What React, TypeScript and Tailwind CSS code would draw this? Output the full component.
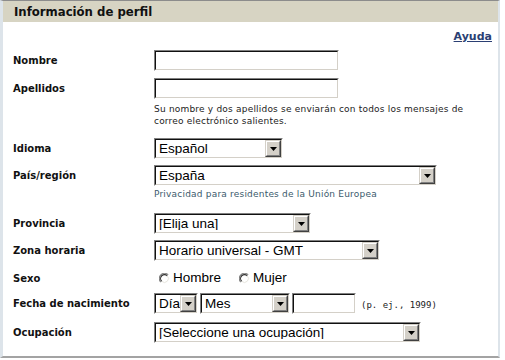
import React from "react";

const label = "w-[141px] shrink-0 text-[10px] font-bold text-[#111] [font-family:'DejaVu_Sans',Verdana,sans-serif]";
const fieldFont = "[font-family:'Liberation_Sans',Arial,sans-serif] text-[13.5px] text-black leading-none";
const smallText = "text-[9px] leading-[12px] tracking-[0.2px] [font-family:'DejaVu_Sans',Verdana,sans-serif]";

function Sunken({ w, children }: { w: number; children?: React.ReactNode }) {
  return (
    <div
      style={{ width: w }}
      className="h-[21px] shrink-0 border border-t-[#808080] border-l-[#808080] border-b-white border-r-white"
    >
      <div className="h-full w-full border border-t-[#111] border-l-[#111] border-b-[#d4d0c8] border-r-[#d4d0c8] bg-white flex items-center">
        {children}
      </div>
    </div>
  );
}

function DropButton() {
  return (
    <div className="h-[17px] w-[16px] shrink-0 border border-t-[#d4d0c8] border-l-[#d4d0c8] border-b-[#404040] border-r-[#404040]">
      <div className="h-full w-full bg-[#d4d0c8] border border-t-white border-l-white border-b-[#808080] border-r-[#808080] flex items-center justify-center">
        <svg width="7" height="4" viewBox="0 0 7 4">
          <path d="M0 0h7L3.5 4z" fill="#000" />
        </svg>
      </div>
    </div>
  );
}

function Select({ w, value }: { w: number; value: string }) {
  return (
    <Sunken w={w}>
      <span className={`${fieldFont} flex-1 pl-[3px] whitespace-nowrap overflow-hidden`}>{value}</span>
      <DropButton />
    </Sunken>
  );
}

function Radio({ text }: { text: string }) {
  return (
    <div className="flex items-center gap-[3px]">
      <svg width="11" height="11" viewBox="0 0 12 12">
        <circle cx="6" cy="6" r="5.5" fill="#fff" />
        <path d="M10 2A5.5 5.5 0 0 0 2 10" stroke="#808080" strokeWidth="1.2" fill="none" />
        <path d="M9 3A4.2 4.2 0 0 0 3 9" stroke="#303030" strokeWidth="1.2" fill="none" />
        <path d="M2 10A5.5 5.5 0 0 0 10 2" stroke="#fff" strokeWidth="1" fill="none" />
        <path d="M3 9A4.2 4.2 0 0 0 9 3" stroke="#e4e2da" strokeWidth="1" fill="none" />
      </svg>
      <span className={fieldFont}>{text}</span>
    </div>
  );
}

function Row({ name, className, children }: { name: string; className?: string; children: React.ReactNode }) {
  return (
    <div className={`flex items-center ${className ?? ""}`}>
      <div className={label}>{name}</div>
      {children}
    </div>
  );
}

export default function App() {
  return (
    <div className="w-[505px] h-[360px] bg-white overflow-hidden">
      <div className="w-[500px] h-[358px] border-t border-t-[#8c8c8c] border-l-[3px] border-l-[#dde4ea] border-r-2 border-r-[#dde4ea] border-b-2 border-b-[#a3a3a3]">
        <div className="h-[21px] bg-[#d7d4c3] pl-[11px] flex items-center text-[13px] font-bold text-[#111] [font-family:'DejaVu_Sans_Condensed',Tahoma,'DejaVu_Sans',sans-serif]">
          Información de perfil
        </div>

        <div className="flex justify-end pr-[6px] pt-[7px] h-[28px]">
          <a className="text-[11px] font-bold underline text-[#2b3f73] [font-family:'DejaVu_Sans',Verdana,sans-serif]">Ayuda</a>
        </div>

        <div className="pl-[10px]">
          <Row name="Nombre">
            <Sunken w={185} />
          </Row>
          <Row name="Apellidos" className="mt-[7px]">
            <Sunken w={185} />
          </Row>
          <div className={`pl-[141px] mt-[4px] text-[#222] ${smallText}`}>
            Su nombre y dos apellidos se enviarán con todos los mensajes de
            <br />
            correo electrónico salientes.
          </div>

          <Row name="Idioma" className="mt-[11px]">
            <Select w={129} value="Español" />
          </Row>
          <Row name="País/región" className="mt-[6px]">
            <Select w={283} value="España" />
          </Row>
          <div className={`pl-[141px] mt-[2px] text-[#3b5a6c] ${smallText}`}>
            Privacidad para residentes de la Unión Europea
          </div>

          <Row name="Provincia" className="mt-[13px]">
            <Select w={157} value="[Elija una]" />
          </Row>
          <Row name="Zona horaria" className="mt-[6px]">
            <Select w={226} value="Horario universal - GMT" />
          </Row>
          <Row name="Sexo" className="mt-[6px] h-[22px]">
            <div className="flex items-center pl-[5px] gap-[18px]">
              <Radio text="Hombre" />
              <Radio text="Mujer" />
            </div>
          </Row>
          <Row name="Fecha de nacimiento" className="mt-[4px]">
            <div className="flex items-center gap-[2px]">
              <Select w={44} value="Día" />
              <Select w={90} value="Mes" />
              <Sunken w={64} />
              <span className="ml-[3px] mt-[4px] text-[9px] text-[#222] [font-family:'DejaVu_Sans_Mono','Liberation_Mono',monospace]">
                (p. ej., 1999)
              </span>
            </div>
          </Row>
          <Row name="Ocupación" className="mt-[8px]">
            <Select w={267} value="[Seleccione una ocupación]" />
          </Row>
        </div>
      </div>
    </div>
  );
}
